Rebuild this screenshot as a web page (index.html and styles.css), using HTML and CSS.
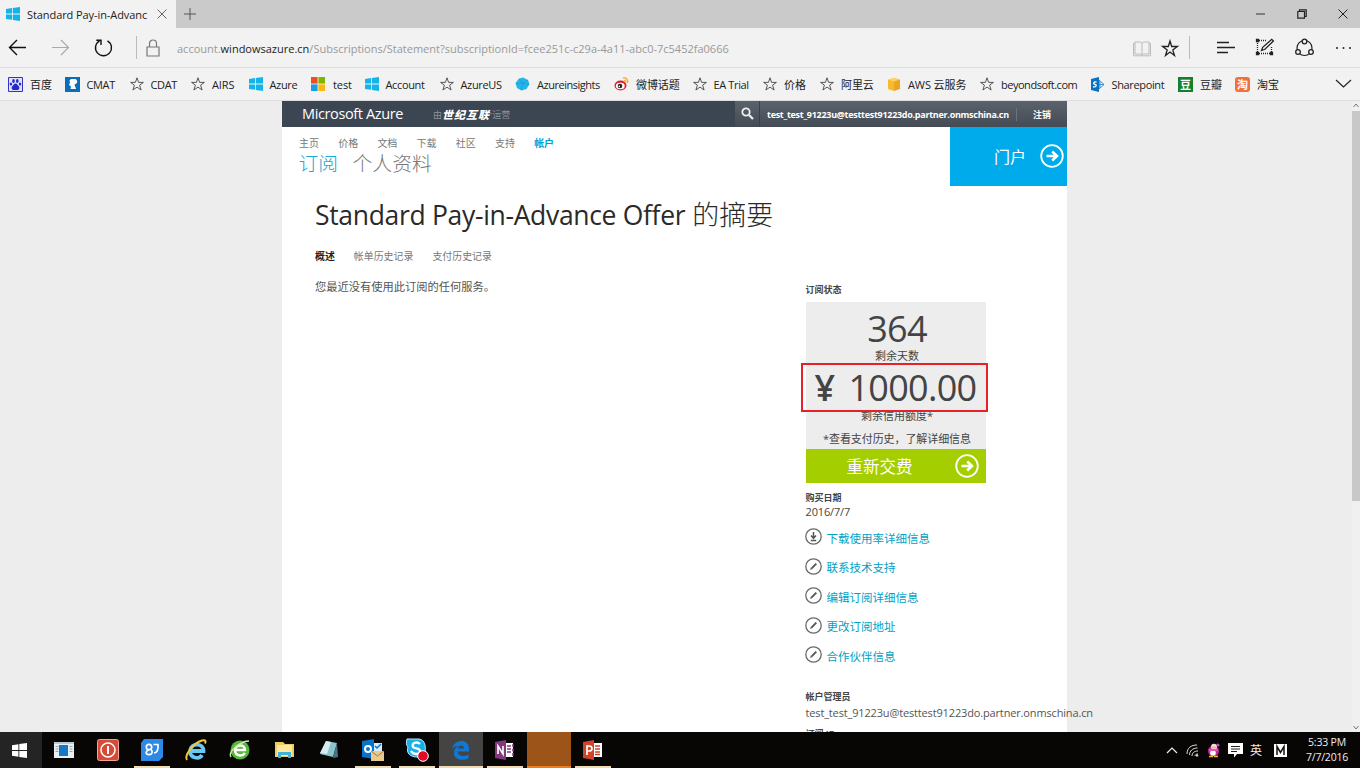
FILE: index.html
```html
<!DOCTYPE html>
<html lang="zh-CN">
<head>
<meta charset="utf-8">
<title>Standard Pay-in-Advance Offer</title>
<link rel="stylesheet" href="styles.css">
</head>
<body>
<svg class="defs" width="0" height="0">
  <symbol id="win" viewBox="0 0 14 14"><path d="M0 2l6-.9v5.4H0zM6.8 1L14 0v6.500H6.800zM0 7.400h6v5.400L0 12zM6.800 7.400H14V14l-7.200-1z" fill="currentColor"/></symbol>
  <symbol id="star" viewBox="0 0 14 14"><path d="M7 .8l1.600 4.600h4.800L9.600 8.200l1.500 4.800L7 10.100 2.900 13l1.500-4.800L.6 5.400h4.800z" fill="none" stroke="#444" stroke-width=".9"/></symbol>
  <symbol id="go" viewBox="0 0 24 24"><circle cx="12" cy="12" r="10.800" fill="none" stroke="#fff" stroke-width="1.800"/><path d="M6.500 12h10M12.200 7.500l4.800 4.500-4.800 4.500" fill="none" stroke="#fff" stroke-width="2.500"/></symbol>
  <symbol id="pen" viewBox="0 0 17 17"><circle cx="8.500" cy="8.500" r="7.700" fill="none" stroke="#6a6a6a" stroke-width="1.300"/><path d="M6.700 10.300l4.600-4.600" stroke="#555" stroke-width="1.900"/><path d="M5 12l.9-2.500 1.600 1.600z" fill="#555"/></symbol>
</svg>

<div class="tabs">
  <div class="tab">
    <svg class="cyan" width="14" height="14"><use href="#win"/></svg>
    <span class="tab-title">Standard Pay-in-Advanc</span>
    <svg width="10" height="10" viewBox="0 0 10 10"><path d="M.5.5l9 9M9.500.5l-9 9" stroke="#666"/></svg>
  </div>
  <svg class="plus" width="12" height="12" viewBox="0 0 12 12"><path d="M6 0v12M0 6h12" stroke="#555"/></svg>
  <div class="window-buttons">
    <svg width="10" height="10" viewBox="0 0 10 10"><path d="M0 5h9" stroke="#333"/></svg>
    <svg width="10" height="10" viewBox="0 0 10 10"><path d="M.8 2.500h6.700v6.700H.8zM2.500 2.300V.8h6.700v6.700H7.700" fill="none" stroke="#222" stroke-width="1.200"/></svg>
    <svg width="10" height="10" viewBox="0 0 10 10"><path d="M.5.5l9 9M9.500.5l-9 9" stroke="#222"/></svg>
  </div>
</div>

<div class="toolbar">
  <svg class="nav" width="130" height="39" viewBox="0 0 130 39" fill="none">
    <path d="M9.500 19.500H26M17 12l-7.500 7.500L17 27" stroke="#111" stroke-width="1.400"/>
    <path d="M52 19.500h16.500M61 12l7.500 7.500L61 27" stroke="#aaa" stroke-width="1.200"/>
    <path d="M99.500 12.800A8 8 0 1 0 107.500 12.800M101 17V12.300H96.300" stroke="#111" stroke-width="1.400"/>
  </svg>
  <i class="sep"></i>
  <svg class="lock" width="14" height="18" viewBox="0 0 14 18" fill="none" stroke="#777" stroke-width="1.200"><path d="M1 8h12v9H1zM3.500 8V4.500a3.500 3.500 0 0 1 7 0V8"/></svg>
  <div class="url">account.<b>windowsazure.cn</b>/Subscriptions/Statement?subscriptionId=fcee251c-c29a-4a11-abc0-7c5452fa0666</div>
  <svg class="tools" width="230" height="39" viewBox="0 0 230 39" fill="none" stroke="#222" stroke-width="1.300">
    <path d="M5 14h5.500l1.500 1 1.500-1H19v12h-5.500l-1.500 1-1.500-1H5zM12 15v12M5 15.500H3.500v12.300h17V15.500H19" stroke="#bbb" stroke-width="1"/>
    <path d="M40 13l1.700 5.500h5.700L42.800 22l1.700 5.500-4.500-3.400-4.500 3.400L37.200 22l-4.600-3.500h5.700z"/>
    <path d="M59.500 8v23" stroke="#bbb" stroke-width="1"/>
    <path d="M87 14.500h12M87 19.500h18M87 24.500h11"/>
    <path d="M129 12.500h7M127.500 13v12.500h14V19" stroke-dasharray="1 1"/><path d="M126.500 11.500h2v2h-2zM126.500 24.500h2v2h-2zM140.500 24.500h2v2h-2z" fill="#222"/><path d="M131.500 22.500l1.200-3.200 9-8 1.700 1.700-8.500 8.300z"/>
    <circle cx="174.500" cy="20" r="7.500" stroke-width="1.200"/><g fill="#f2f2f2"><circle cx="174.500" cy="13.500" r="2.300"/><circle cx="168" cy="24" r="2.300"/><circle cx="181" cy="24" r="2.300"/></g>
    <g fill="#222" stroke="none"><circle cx="207" cy="20" r="1"/><circle cx="213.500" cy="20" r="1"/><circle cx="220" cy="20" r="1"/></g>
  </svg>
</div>

<div class="favorites">
  <div><svg width="15" height="15" viewBox="0 0 15 15"><path fill="#dfe0fa" stroke="#3034c8" d="M.5.5h14v14H.5z"/><g fill="#2529c5"><ellipse cx="5.500" cy="4" rx="1.300" ry="2"/><ellipse cx="9.300" cy="4" rx="1.300" ry="2"/><ellipse cx="2.900" cy="7" rx="1.200" ry="1.600"/><ellipse cx="12" cy="7" rx="1.200" ry="1.600"/><path d="M7.500 6.500c1.500 0 2 1.500 3.500 3 1 1.500 0 3.500-1.500 3.500h-4C4 13 3 11 4 9.500c1.500-1.500 2-3 3.500-3z"/></g></svg><span>百度</span></div>
  <div><svg width="15" height="15" viewBox="0 0 15 15"><path fill="#0870b8" d="M0 0h15v15H0z"/><path d="M6 2h4.500c1.500 1 2 2.500 1.500 4L9.500 7.500 11 12H5.500L6 9.500 4 8l1-2.500-.5-2z" fill="#fff"/></svg><span class="tight">CMAT</span></div>
  <div><svg width="14" height="14"><use href="#star"/></svg><span class="tight">CDAT</span></div>
  <div><svg width="14" height="14"><use href="#star"/></svg><span>AIRS</span></div>
  <div><svg class="cyan" width="14" height="14"><use href="#win"/></svg><span class="tight">Azure</span></div>
  <div><svg width="14" height="14" viewBox="0 0 14 14"><path fill="#f04e1f" d="M0 0h6.600v6.600H0z"/><path fill="#7db700" d="M7.400 0H14v6.600H7.400z"/><path fill="#159fe8" d="M0 7.400h6.600V14H0z"/><path fill="#fdb70b" d="M7.400 7.400H14V14H7.400z"/></svg><span class="word">test</span></div>
  <div><svg class="cyan" width="14" height="14"><use href="#win"/></svg><span class="tight">Account</span></div>
  <div><svg width="14" height="14"><use href="#star"/></svg><span class="tight">AzureUS</span></div>
  <div><svg width="15" height="14" viewBox="0 0 15 14"><path d="M4 1.500l4-1 5 2.500 1.500 4-3 5-5 1.500L2 11 .5 6z" fill="#25b5e8"/><path d="M4 2l4 4 5-3M8 6l-2 7M8 6l6 2M8 6L1 7" stroke="#1d9bd6" stroke-width=".7" fill="none"/></svg><span class="dense">Azureinsights</span></div>
  <div><svg width="15" height="14" viewBox="0 0 15 14"><ellipse cx="6.500" cy="8.500" rx="6" ry="5" fill="#dc2730"/><ellipse cx="6.300" cy="9" rx="4.400" ry="3.200" fill="#fff"/><circle cx="6" cy="9" r="2.300" fill="#222"/><circle cx="5.300" cy="9.400" r=".8" fill="#fff"/><path d="M9 1.200c3-1 5.500 1.500 4.500 4.800M9.800 3.500c1.500-.5 2.300.7 2 2" fill="none" stroke="#f3a52f" stroke-width="1.300"/></svg><span>微博话题</span></div>
  <div><svg width="14" height="14"><use href="#star"/></svg><span class="tight">EA Trial</span></div>
  <div><svg width="14" height="14"><use href="#star"/></svg><span>价格</span></div>
  <div><svg width="14" height="14"><use href="#star"/></svg><span>阿里云</span></div>
  <div><svg width="14" height="15" viewBox="0 0 14 15"><path d="M1 2.500L7 1v13l-6-2z" fill="#f7b92e"/><path d="M7 1l6 1.500V12l-6 2z" fill="#eba521"/><path d="M1 2.500L7 1l6 1.500L7 4.500z" fill="#ffd269"/></svg><span>AWS 云服务</span></div>
  <div><svg width="14" height="14"><use href="#star"/></svg><span class="dense">beyondsoft.com</span></div>
  <div><svg width="14" height="15" viewBox="0 0 14 15"><path d="M8 3l5 4.500L8 12zM9 4v7M8 7.500h5" fill="#fff" stroke="#3b91cf"/><path d="M0 2l8-2v15l-8-2z" fill="#0873c4"/><path d="M5.500 5C2 4.500 2 7 4 7.300S5.500 10.500 2 9.800" fill="none" stroke="#fff" stroke-width="1.300"/></svg><span class="tight">Sharepoint</span></div>
  <div><i class="tile green">豆</i><span>豆瓣</span></div>
  <div><i class="tile orange">淘</i><span>淘宝</span></div>
  <svg class="more" width="18" height="10" viewBox="0 0 18 10"><path d="M1 1l7.500 7L16 1" fill="none" stroke="#222" stroke-width="1.200"/></svg>
</div>

<main class="viewport">
  <div class="page">
    <header class="bar">
      <span class="brand">Microsoft Azure</span>
      <span class="operator">由<b>世纪互联</b><sup>•</sup>运营</span>
      <div class="account">
        <span class="search"><svg width="13" height="13" viewBox="0 0 13 13" fill="none" stroke="#eee"><circle cx="5" cy="5" r="3.700" stroke-width="1.800"/><path d="M8 8l4 4" stroke-width="2.300"/></svg></span>
        <span class="mail">test_test_91223u@testtest91223do.partner.onmschina.cn</span>
        <span class="signout">注销</span>
      </div>
    </header>
    <div class="top">
      <div>
        <nav class="menu"><a>主页</a><a>价格</a><a>文档</a><a>下载</a><a>社区</a><a>支持</a><a class="on">帐户</a></nav>
        <div class="sections"><span class="on">订阅</span><span>个人资料</span></div>
      </div>
      <div class="portal"><span>门户</span><svg width="24" height="24"><use href="#go"/></svg></div>
    </div>
    <h1><span class="latin">Standard Pay-in-Advance Offer</span> 的摘要</h1>
    <div class="subtabs"><span class="on">概述</span><span>帐单历史记录</span><span>支付历史记录</span></div>
    <div class="columns">
      <p class="message">您最近没有使用此订阅的任何服务。</p>
      <aside>
        <h2>订阅状态</h2>
        <div class="status">
          <div class="big days">364</div>
          <div class="caption">剩余天数</div>
          <div class="big credit"><span class="yen">¥</span><span>1000.00</span></div>
          <div class="caption second">剩余信用额度*</div>
          <div class="note">*查看支付历史，了解详细信息</div>
          <div class="mark"></div>
        </div>
        <div class="renew"><span>重新交费</span><svg width="24" height="24"><use href="#go"/></svg></div>
        <h2 class="bought">购买日期</h2>
        <div class="date">2016/7/7</div>
        <ul>
          <li><svg width="17" height="17" viewBox="0 0 17 17"><circle cx="8.500" cy="8.500" r="7.700" fill="none" stroke="#6a6a6a" stroke-width="1.300"/><path d="M8.500 4v6M6 7.500l2.500 2.800L11 7.500M5.800 12.500h5.400" fill="none" stroke="#555" stroke-width="1.500"/></svg>下载使用率详细信息</li>
          <li><svg width="17" height="17"><use href="#pen"/></svg>联系技术支持</li>
          <li><svg width="17" height="17"><use href="#pen"/></svg>编辑订阅详细信息</li>
          <li><svg width="17" height="17"><use href="#pen"/></svg>更改订阅地址</li>
          <li><svg width="17" height="17"><use href="#pen"/></svg>合作伙伴信息</li>
        </ul>
        <h2 class="admin">帐户管理员</h2>
        <div class="admin-mail">test_test_91223u@testtest91223do.partner.onmschina.cn</div>
        <h2 class="subid">订阅 ID</h2>
      </aside>
    </div>
  </div>
  <div class="scrollbar"><svg width="6" height="5" viewBox="0 0 6 5"><path d="M.5 4L3 1l2.500 3" fill="none" stroke="#777"/></svg><i></i><svg width="6" height="5" viewBox="0 0 6 5"><path d="M.5 1L3 4l2.500-3" fill="none" stroke="#777"/></svg></div>
</main>

<footer class="taskbar">
  <div class="apps">
    <div class="start"><svg class="white" width="15" height="15"><use href="#win"/></svg></div>
    <div><svg width="20" height="16" viewBox="0 0 20 16"><path fill="#e8f0f4" d="M0 0h20v16H0z"/><path fill="#1677c9" d="M5 3h9v11H5z"/><path d="M0 1h20M1.500 4.500h3M1.500 7h3M1.500 9.500h3M15.500 4.500h3M15.500 7h3M15.500 9.500h3" stroke="#8aa4b5"/></svg></div>
    <div><svg width="22" height="22" viewBox="0 0 22 22"><rect x=".5" y=".5" width="21" height="21" rx="2" fill="#d64b37" stroke="#f2a495"/><circle cx="11" cy="11" r="7" fill="none" stroke="#fff" stroke-width="1.500"/><path d="M11 7v8" stroke="#fff" stroke-width="2"/></svg></div>
    <div class="run"><svg width="22" height="22" viewBox="0 0 22 22"><path d="M3 0h19v18l-4 4H0V4z" fill="#2c89e5"/><g fill="none" stroke="#fff" stroke-width="1.700"><circle cx="8" cy="8" r="2.700"/><path d="M8 10.700c-4 1.500-3.500 5 0 5s4-3.500 2-5M12.500 5.500h4.500c.5 5-1 8.500-4 8.500"/></g></svg></div>
    <div><svg width="24" height="24" viewBox="0 0 24 24" fill="none"><path d="M6.500 13h13C20 5 7 4 6 13c0 7 9 9 12 4" stroke="#67c9f5" stroke-width="3.800"/><path d="M3 22C0 18 9 5 18 2.500c4-1 4 1 3 3" stroke="#f2ca35" stroke-width="2"/></svg></div>
    <div><svg width="22" height="22" viewBox="0 0 22 22" fill="none"><circle cx="11" cy="11" r="9.500" fill="#55b936"/><path d="M6 11h10c0-6-9-6-10 0 0 6 7 7 10 3" stroke="#fff" stroke-width="2.500"/><path d="M2 18C-2 12 13 2 20 2" stroke="#c9edae" stroke-width="1.500"/></svg></div>
    <div><svg width="21" height="18" viewBox="0 0 21 18"><path d="M1 1h8l2 2h9v13H1z" fill="#f1cb61"/><path d="M3 4h15v11H3z" fill="#ffe8a0"/><path d="M4 17v-6h13v6h-3v-3H7v3z" fill="#43b3d5"/></svg></div>
    <div><svg width="20" height="20" viewBox="0 0 20 20"><path d="M7 1l11 2-4 14-13-3z" fill="#8ac4cc"/><path d="M7 1l5 1-4 12-7-1z" fill="#d6ecee"/><path d="M18 3l1 14-5 1z" fill="#48767c"/></svg></div>
    <div class="run"><svg width="24" height="24" viewBox="0 0 24 24"><path d="M12 5h9v12h-9z" fill="#dcecff"/><path d="M1 3l12-2v20L1 19z" fill="#0874c9"/><circle cx="7" cy="11" r="3" fill="none" stroke="#fff" stroke-width="2"/><path d="M14 8l2 2 4-4" fill="none" stroke="#0874c9" stroke-width="1.500"/><path d="M10 13h13v10H10z" fill="#e8c98f"/><path d="M10 13l6.500 5 6.500-5" fill="none" stroke="#a57a3c"/></svg></div>
    <div class="run"><svg width="24" height="24" viewBox="0 0 24 24"><path d="M2 1h12c6 1 7 7 6 13 0 5-4 6-8 5C5 19 1 15 3 9c-2-2-2-5-1-8z" fill="#19afe9" stroke="#b9eaff"/><path d="M15 6c-3-3-9-1-7 3 2 2 7 1 7 4 0 4-7 4-9 0" fill="none" stroke="#fff" stroke-width="2.300"/><circle cx="18" cy="18" r="5.300" fill="#e00b25" stroke="#fff"/></svg></div>
    <div class="run edge"><svg width="20" height="20" viewBox="0 0 20 20"><path d="M1 9C3-1 18-2 18 9v2.500H7c0 5 6 5.500 10.500 3v4C9 22 2 18 3 12c.3-3 2-5 5-6-4 0-6 1-7 3zm6-.5h6c0-4-5.500-4-6 0z" fill="#0f78d4"/></svg></div>
    <div class="run"><svg width="20" height="20" viewBox="0 0 20 20"><path d="M10 3h8v14h-8z" fill="#fff"/><path d="M12 6h4M12 9h4M12 12h4M18 4v3M18 8.500v3M18 13v3" stroke="#80397b" stroke-width="1.500"/><path d="M0 2l11-2v20L0 18z" fill="#80397b"/><path d="M3 14V6l5 8V6" fill="none" stroke="#fff" stroke-width="1.600"/></svg></div>
    <div class="run amber"></div>
    <div class="run"><svg width="20" height="20" viewBox="0 0 20 20"><path d="M10 3h9v14h-9z" fill="#fff"/><path d="M12 6h5M12 9h5M12 12h5M12 14.500h5" stroke="#d04525" stroke-width="1.300"/><path d="M0 2l11-2v20L0 18z" fill="#d04525"/><path d="M4 15V6h2c4 0 4 5 0 5H4" fill="none" stroke="#fff" stroke-width="1.700"/></svg></div>
  </div>
  <div class="tray">
    <svg width="12" height="8" viewBox="0 0 12 8"><path d="M1 7l5-5 5 5" fill="none" stroke="#eee" stroke-width="1.200"/></svg>
    <svg width="13" height="13" viewBox="0 0 13 13" fill="none" stroke="#ddd"><path d="M1 10C1 4 5 1 11 1M3.500 11c0-4 3-7 8-7M6 12c0-3 2-5 6-5M9 12c0-1 1-2 3-2"/><circle cx="11" cy="11.500" r=".8" fill="#fff"/></svg>
    <svg width="13" height="15" viewBox="0 0 13 15"><ellipse cx="6.500" cy="8" rx="5.500" ry="5.500" fill="#c52599"/><circle cx="7" cy="3.800" r="3" fill="#f3d9e9"/><ellipse cx="6" cy="10" rx="2.800" ry="2.800" fill="#fff"/><path d="M2 13.500h4M7 13.500h4M5 4.500h4" stroke="#f4b92c" stroke-width="1.500"/><path d="M10 1l2 2M2 7h9" stroke="#e552b6" stroke-width="2"/></svg>
    <svg width="15" height="15" viewBox="0 0 15 15"><path d="M0 0h15v11H9l-3 3.500V11H0z" fill="#fff"/><path d="M3 3.500h9M3 6h9M3 8.500h6" stroke="#222"/></svg>
    <span class="ime">英</span>
    <svg class="m" width="13" height="13" viewBox="0 0 13 13"><path fill="#fff" d="M0 0h13v13H0z"/><path d="M3 11V2.500l3.500 6 3.500-6V11" fill="none" stroke="#111" stroke-width="1.500"/></svg>
    <div class="clock"><span>5:33 PM</span><span>7/7/2016</span></div>
  </div>
</footer>
</body>
</html>
```
FILE: styles.css
```css
* { box-sizing: border-box; }
body { margin: 0; width: 1360px; height: 768px; overflow: hidden; display: flex; flex-direction: column; font-family: "Open Sans", "Noto Sans CJK SC", sans-serif; font-size: 11px; color: #222; background: #ededed; }
svg { display: block; flex: none; overflow: visible; }
.defs { position: absolute; }
.cyan { color: #14b4e8; }
.white { color: #fff; }
h1, h2, p, ul { margin: 0; padding: 0; font-weight: 400; }

.tabs { height: 28px; background: #cacaca; display: flex; align-items: center; flex: none; }
.tab { width: 176px; height: 28px; padding-left: 6px; background: #f2f2f2; display: flex; align-items: center; }
.tab-title { width: 121px; margin: 0 9px 0 7px; overflow: hidden; white-space: nowrap; letter-spacing: -.08px; }
.plus { margin-left: 8px; }
.window-buttons { margin: 0 12px 0 auto; display: flex; gap: 31px; }

.toolbar { height: 40px; flex: none; display: flex; align-items: center; background: #f2f2f2; border-bottom: 1px solid #dedede; }
.sep { width: 1px; height: 23px; margin-left: 6px; background: #bbb; }
.lock { margin-left: 9px; }
.url { margin-left: 17px; padding-top: 2px; color: #999; white-space: nowrap; }
.url b { font-weight: 400; color: #222; }
.tools { margin-left: auto; }

.favorites { height: 33px; flex: none; padding-left: 8px; display: grid; align-items: center; grid-template-columns: 57px 65px 61px 58px 62px 54px 75px 75px 99px 79px 70px 57px 67px 93px 111px 87px 57px 60px 1fr; background: #f2f2f2; border-bottom: 1px solid #ddd; }
.favorites div { display: flex; align-items: center; gap: 7px; white-space: nowrap; letter-spacing: -.1px; }
.favorites .tight { margin-left: -.5px; letter-spacing: -.36px; }
.favorites .dense { letter-spacing: -.48px; }
.favorites .word { margin-left: 1px; }
.more { justify-self: end; margin-right: 7px; }
.tile { width: 15px; height: 15px; font: bold 11px/14px "Noto Sans CJK SC", sans-serif; text-align: center; color: #fff; }
.green { background: #14802a; }
.orange { background: #f1713b; border-radius: 3px; }

.viewport { height: 631px; flex: none; display: flex; background: #ededed; }
.page { width: 785px; height: 631px; margin-left: 282px; background: #fff; clip-path: inset(0 -100px 0 0); }
.bar { height: 26px; display: flex; align-items: center; background: #3c4552; color: #fff; white-space: nowrap; }
.brand { margin: -2px 0 0 20px; width: 131px; font-size: 14.500px; letter-spacing: -.38px; }
.operator { font-size: 9px; color: #8c939b; display: flex; align-items: center; }
.operator b { font-weight: 900; font-style: italic; font-size: 11px; color: #fff; letter-spacing: 1px; }
.operator sup { font-size: 6px; }
.account { width: 332px; height: 26px; margin-left: auto; display: flex; align-items: center; background: linear-gradient(#5a626b, #444b54); font-weight: 700; font-size: 9px; }
.search { width: 25px; height: 26px; padding-bottom: 2px; border-right: 1px solid #39404a; display: flex; align-items: center; justify-content: center; }
.mail { width: 257px; padding-left: 7px; border-right: 1px solid #6c737b; letter-spacing: -.28px; }
.signout { margin-left: 16px; }

.top { height: 59px; display: flex; justify-content: space-between; color: #777; }
.menu { display: flex; gap: 19.200px; padding: 9px 0 0 17px; font-size: 10px; line-height: 15px; }
.menu .on { color: #00a1d6; font-weight: 700; }
.sections { display: flex; gap: 14.500px; padding-left: 16.500px; margin-top: -1px; font-size: 19.800px; line-height: 28px; font-weight: 300; color: #777; }
.sections .on { color: #1ba9cf; }
.portal { width: 117px; height: 59px; padding: 0 3.500px 2px 0; background: #00abec; color: #fff; display: flex; align-items: center; justify-content: flex-end; gap: 13.500px; font-size: 16px; font-weight: 400; }
h1 { padding: 12px 0 0 33px; height: 57px; font-size: 27px; line-height: 34px; font-weight: 300; color: #2a2a2a; white-space: nowrap; }
.latin { font-size: 26.500px; font-weight: 400; letter-spacing: -.32px; }
.subtabs { height: 36px; padding: 4px 0 0 33px; display: flex; gap: 19px; font-size: 9.930px; line-height: 18px; color: #777; }
.subtabs .on { color: #222; font-weight: 700; }
.columns { display: flex; padding-left: 33px; }
.message { width: 490.500px; font-size: 11.250px; line-height: 16px; color: #555; }
aside { width: 180px; white-space: nowrap; }
h2 { font-size: 9px; line-height: 12px; font-weight: 700; color: #444; }
aside > h2:first-child { margin-top: 5px; }
.status { position: relative; height: 147.500px; margin-top: 5.500px; background: #ededed; text-align: center; color: #444; }
.big { font-size: 36px; }
.days { padding: 9px 0 0 3px; height: 46px; line-height: 36px; letter-spacing: -.8px; }
.caption { height: 14px; line-height: 16px; padding-left: 3px; }
.credit { height: 46px; line-height: 51px; display: flex; justify-content: space-between; padding: 0 9px 0 9px; letter-spacing: -.7px; }
.yen { font-weight: 600; }
.second { height: 23.500px; line-height: 15px; }
.note { padding-left: 3px; line-height: 16px; letter-spacing: -.08px; }
.mark { position: absolute; left: -5px; top: 61px; width: 187.500px; height: 49px; border: 2px solid #e62129; }
.renew { height: 34px; padding-right: 7px; background: #a4ce00; color: #fff; display: flex; align-items: center; justify-content: flex-end; gap: 42px; font-size: 16.500px; }
.bought { margin-top: 9px; }
.date { font-size: 11px; line-height: 15px; letter-spacing: -.15px; color: #444; }
ul { list-style: none; margin-top: 4px; }
li { height: 29.500px; display: flex; align-items: center; gap: 4.500px; font-size: 11.500px; color: #00a1c4; }
li svg { margin: -2px 0 0 -.5px; }
.admin { margin-top: 20px; }
.admin-mail { font-size: 11px; line-height: 16px; margin-top: 2px; letter-spacing: -.15px; color: #555; }
.subid { margin-top: 7px; }
.scrollbar { width: 8px; margin-left: auto; display: flex; flex-direction: column; align-items: center; padding: 2px 0; background: #f0f0f0; }
.scrollbar i { width: 8px; height: 390px; margin: 3px 0 auto; background: #c8c8c8; }

.taskbar { height: 36px; flex: none; background: #080505; display: flex; color: #eee; }
.apps { display: grid; grid-template-columns: 42px repeat(13, 44.100px); }
.apps > div { display: flex; align-items: center; justify-content: center; }
.apps .start { background: #242424; padding-right: 4px; }
.run { background: linear-gradient(#f0dcae, #f0dcae) 50% 100% / 36px 2px no-repeat; }
.apps .edge { background: linear-gradient(#444 34px, #f0dcae 34px); }
.apps .amber { background: linear-gradient(#9d5418 34px, #f07c18 34px); }
.tray { margin-left: auto; display: flex; align-items: center; gap: 8px; }
.ime { font-size: 12px; margin: 0 0 0 -1px; }
.m { margin-left: 4px; }
.clock { width: 64px; margin-left: 1px; padding-right: 2px; display: flex; flex-direction: column; align-items: center; font-size: 10.500px; line-height: 15px; letter-spacing: -.2px; }
```
